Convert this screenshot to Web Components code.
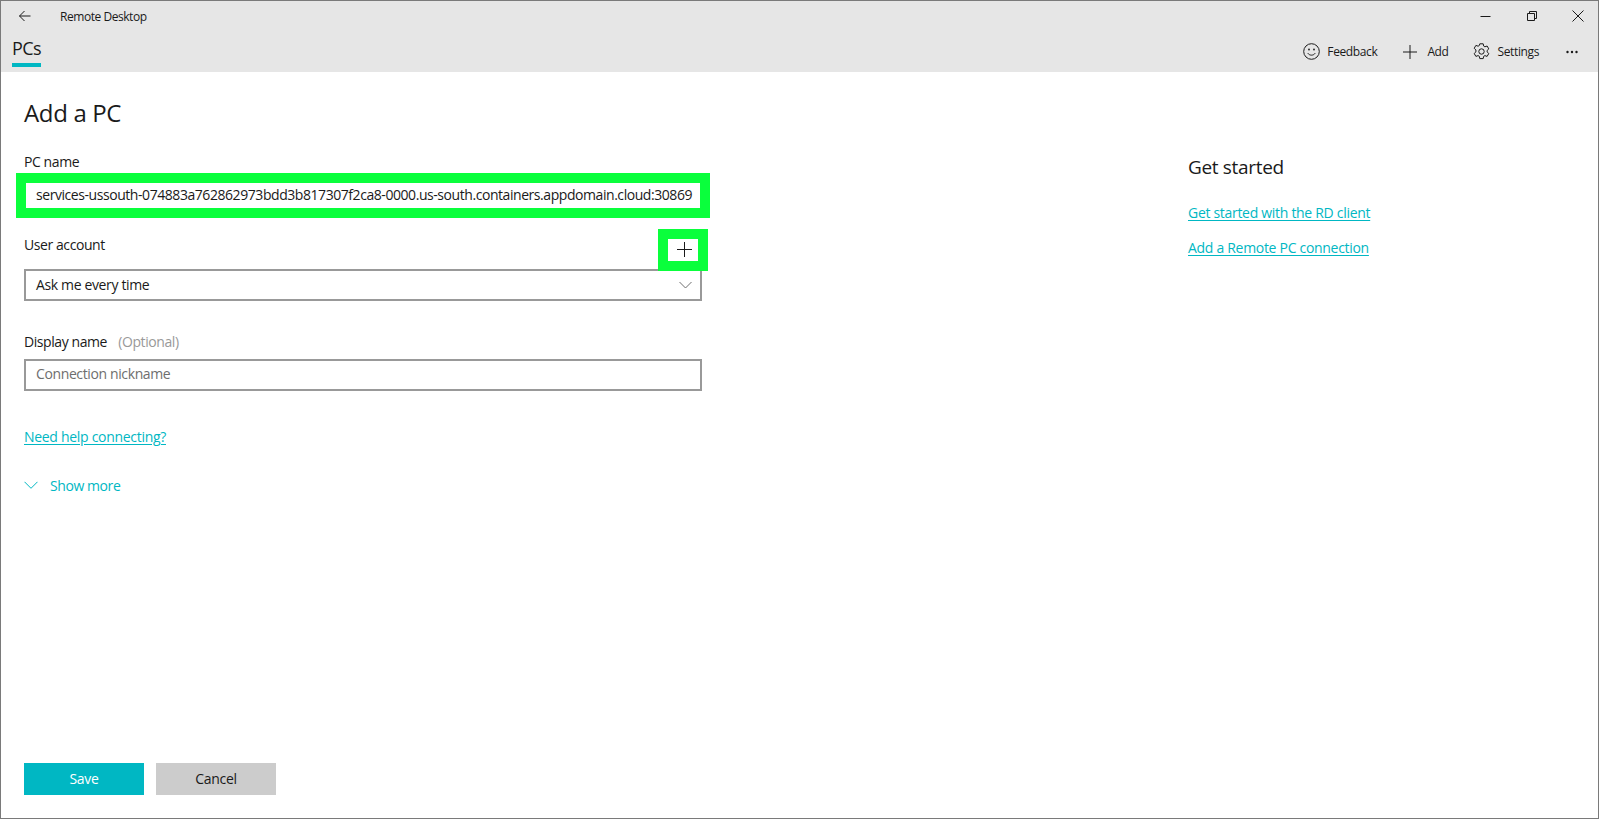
<!DOCTYPE html>
<html lang="en">
<head>
<meta charset="utf-8">
<title>Remote Desktop</title>
<style>
  html, body { margin: 0; padding: 0; background: #fff; }
  body { font-family: "Open Sans", "Noto Sans", sans-serif; font-size: 14px; color: #1a1a1a; }
</style>
</head>
<body>
<app-window></app-window>
<script>
const BASE_FONT = '"Open Sans", "Noto Sans", sans-serif';

class TitleBar extends HTMLElement {
  constructor() {
    super();
    this.shadow = this.attachShadow({ mode: 'open' });
  }

  connectedCallback () {
    this.shadow.innerHTML = /*html*/`
    <style>
      :host{
        display: flex;
        align-items: center;
        height: 30px;
        font-family: ${BASE_FONT};
        font-size: 12px;
        letter-spacing: -0.45px;
        color: #1a1a1a;
      }
      svg{ display: block; fill: none; stroke: #1a1a1a; stroke-width: 1; }
      .back{ margin-left: 18px; }
      .title{ margin-left: 29px; flex: 1; }
      .controls{ display: flex; margin-right: 14px; }
      .controls svg{ margin-left: 34px; }
    </style>
    <svg class="back" width="12" height="12" viewBox="0 0 12 12"><path d="M.5 6h11M5.500 1 .5 6l5 5"/></svg>
    <span class="title">Remote Desktop</span>
    <div class="controls">
      <svg width="12" height="12" viewBox="0 0 12 12"><path d="M.5 6.500h10"/></svg>
      <svg width="12" height="12" viewBox="0 0 12 12"><path d="M1.500 3.500h7v7h-7zM3.500 3.500v-2h7v7h-2"/></svg>
      <svg width="12" height="12" viewBox="0 0 12 12"><path d="M.5.500l11 11M11.500.500l-11 11"/></svg>
    </div>
    `;
  }
}

class CommandBar extends HTMLElement {
  constructor() {
    super();
    this.shadow = this.attachShadow({ mode: 'open' });
  }

  connectedCallback () {
    this.shadow.innerHTML = /*html*/`
    <style>
      :host{
        display: flex;
        justify-content: space-between;
        height: 41px;
        font-family: ${BASE_FONT};
        color: #1a1a1a;
      }
      .tab{
        margin-left: 11px;
        height: 36px;
        box-sizing: border-box;
        border-bottom: 4px solid #00b7c3;
        font-size: 18px;
        line-height: 34px;
        letter-spacing: -0.6px;
      }
      .tools{
        display: flex;
        align-items: center;
        font-size: 12px;
        letter-spacing: -0.38px;
        height: 41px;
      }
      .tool{ display: flex; align-items: center; }
      svg{ display: block; fill: none; stroke: #1a1a1a; stroke-width: 1; }
      .feedback svg{ margin-right: 7px; }
      .add{ margin-left: 26px; }
      .add svg{ margin-right: 10px; }
      .settings{ margin-left: 24px; }
      .settings svg{ margin-right: 8px; }
      .more{ margin-left: 27px; margin-right: 20px; }
      .more svg{ fill: #1a1a1a; stroke: none; }
    </style>
    <div class="tab">PCs</div>
    <div class="tools">
      <div class="tool feedback">
        <svg width="17" height="17" viewBox="0 0 17 17"><circle cx="8.500" cy="8.500" r="7.800"/><circle cx="6" cy="6.500" r=".9" fill="#1a1a1a" stroke="none"/><circle cx="11" cy="6.500" r=".9" fill="#1a1a1a" stroke="none"/><path d="M4.800 10.200c1.800 2.600 5.600 2.600 7.400 0"/></svg>
        <span>Feedback</span>
      </div>
      <div class="tool add">
        <svg width="14" height="14" viewBox="0 0 14 14"><path d="M7 0v14M0 7h14"/></svg>
        <span>Add</span>
      </div>
      <div class="tool settings">
        <svg width="17" height="17" viewBox="0 0 17 17"><path d="M6.800 .8h3.400l.5 2.300 1.200.7 2.200-.8 1.700 2.900-1.700 1.600v1.400l1.700 1.600-1.700 2.900-2.200-.8-1.200.7-.5 2.300H6.800l-.5-2.300-1.200-.7-2.200.8-1.700-2.900 1.700-1.600V6.900L1.200 5.300l1.700-2.900 2.200.8 1.200-.7z"/><circle cx="8.500" cy="8.500" r="2.700"/></svg>
        <span>Settings</span>
      </div>
      <div class="tool more">
        <svg width="12" height="4" viewBox="0 0 12 4"><circle cx="1.500" cy="2" r="1.200"/><circle cx="6" cy="2" r="1.200"/><circle cx="10.500" cy="2" r="1.200"/></svg>
      </div>
    </div>
    `;
  }
}

class FieldLabel extends HTMLElement {
  constructor() {
    super();
    this.attachShadow({ mode: 'open' }).innerHTML = /*html*/`
    <style>
      :host{
        display: block;
        height: 20px;
        line-height: 20px;
        font-size: 14px;
        letter-spacing: -0.42px;
        color: #1a1a1a;
      }
    </style>
    <slot></slot>
    `;
  }
}

class TextBox extends HTMLElement {
  constructor() {
    super();
    this.attachShadow({ mode: 'open' }).innerHTML = /*html*/`
    <style>
      :host{
        display: block;
        box-sizing: border-box;
        height: 32px;
        border: 2px solid #999;
        padding-left: 10px;
        line-height: 26px;
        font-size: 14px;
        letter-spacing: -0.38px;
        color: #1a1a1a;
        background: #fff;
      }
      :host([placeholder]){ color: #6e6e6e; }
      :host([highlight]){
        height: 45px;
        margin: 0 -8px;
        border: 10px solid #0aff3c;
        padding-left: 10px;
        line-height: 23px;
        letter-spacing: -0.44px;
        white-space: nowrap;
        overflow: hidden;
      }
    </style>
    <slot></slot>
    `;
  }
}

class ComboBox extends HTMLElement {
  constructor() {
    super();
    this.attachShadow({ mode: 'open' }).innerHTML = /*html*/`
    <style>
      :host{
        display: flex;
        justify-content: space-between;
        align-items: center;
        box-sizing: border-box;
        height: 32px;
        border: 2px solid #999;
        padding: 0 8px 0 10px;
        line-height: 26px;
        font-size: 14px;
        letter-spacing: -0.36px;
        color: #1a1a1a;
      }
      svg{ display: block; fill: none; stroke: #6e6e6e; stroke-width: 1; }
    </style>
    <slot></slot>
    <svg width="13" height="8" viewBox="0 0 13 8"><path d="M.5 1l6 6 6-6"/></svg>
    `;
  }
}

class PlusButton extends HTMLElement {
  constructor() {
    super();
    this.attachShadow({ mode: 'open' }).innerHTML = /*html*/`
    <style>
      :host{
        display: flex;
        align-items: center;
        justify-content: center;
        box-sizing: border-box;
        width: 50px;
        height: 42px;
        margin-right: -6px;
        margin-bottom: -2px;
        border: 10px solid #0aff3c;
        background: #fff;
        position: relative;
      }
      svg{ display: block; fill: none; stroke: #1a1a1a; stroke-width: 1; margin: -2px 0 0 2px; }
    </style>
    <svg width="15" height="15" viewBox="0 0 15 15"><path d="M7.500 0v15M0 7.500h15"/></svg>
    `;
  }
}

class LinkText extends HTMLElement {
  constructor() {
    super();
    this.attachShadow({ mode: 'open' }).innerHTML = /*html*/`
    <style>
      :host{
        display: block;
        width: max-content;
        height: 20px;
        line-height: 20px;
        font-size: 14px;
        letter-spacing: -0.3px;
        color: #00b7c3;
        text-decoration: underline;
        text-underline-offset: 2px;
      }
    </style>
    <slot></slot>
    `;
  }
}

class ActionButton extends HTMLElement {
  constructor() {
    super();
    this.attachShadow({ mode: 'open' }).innerHTML = /*html*/`
    <style>
      :host{
        display: flex;
        align-items: center;
        justify-content: center;
        box-sizing: border-box;
        width: 120px;
        height: 32px;
        padding-bottom: 2px;
        font-size: 14px;
        letter-spacing: -0.27px;
        background: #ccc;
        color: #1a1a1a;
      }
      :host([accent]){ background: #00b7c3; color: #fff; }
    </style>
    <slot></slot>
    `;
  }
}

class AddPcForm extends HTMLElement {
  constructor() {
    super();
    this.shadow = this.attachShadow({ mode: 'open' });
  }

  connectedCallback () {
    this.shadow.innerHTML = /*html*/`
    <style>
      :host{
        display: flex;
        flex-direction: column;
        width: 678px;
        margin-left: 23px;
      }
      h1{
        margin: 25px 0 23px;
        height: 32px;
        line-height: 32px;
        font-size: 24px;
        font-weight: 400;
        letter-spacing: -0.35px;
        color: #1a1a1a;
      }
      .pc-name{ margin-top: 1px; }
      .account-row{
        display: flex;
        justify-content: space-between;
        align-items: flex-start;
        margin-top: 11px;
        height: 40px;
      }
      .account-row field-label{ margin-top: 6px; }
      .display-label{ margin-top: 31px; margin-bottom: 7px; }
      .optional{ color: #999; margin-left: 8px; }
      .help{ margin-top: 36px; }
      .more{
        display: flex;
        align-items: center;
        height: 20px;
        margin-top: 28px;
        font-size: 14px;
        letter-spacing: -0.42px;
        color: #00b7c3;
      }
      .more svg{ display: block; fill: none; stroke: #00b7c3; stroke-width: 1; margin-right: 12px; }
    </style>
    <h1>Add a PC</h1>
    <field-label>PC name</field-label>
    <text-box class="pc-name" highlight>services-ussouth-074883a762862973bdd3b817307f2ca8-0000.us-south.containers.appdomain.cloud:30869</text-box>
    <div class="account-row">
      <field-label>User account</field-label>
      <plus-button></plus-button>
    </div>
    <combo-box>Ask me every time</combo-box>
    <field-label class="display-label">Display name <span class="optional">(Optional)</span></field-label>
    <text-box placeholder>Connection nickname</text-box>
    <link-text class="help">Need help connecting?</link-text>
    <div class="more">
      <svg width="14" height="8" viewBox="0 0 14 8"><path d="M.5 .8l6.500 6.500L13.500 .8"/></svg>
      <span>Show more</span>
    </div>
    `;
  }
}

class HelpPanel extends HTMLElement {
  constructor() {
    super();
    this.shadow = this.attachShadow({ mode: 'open' });
  }

  connectedCallback () {
    this.shadow.innerHTML = /*html*/`
    <style>
      :host{
        display: flex;
        flex-direction: column;
        margin-left: 486px;
        padding-top: 81px;
      }
      h2{
        margin: 0 0 22px;
        height: 28px;
        line-height: 28px;
        font-size: 19px;
        font-weight: 400;
        letter-spacing: -0.33px;
        color: #1a1a1a;
      }
      link-text{ margin-bottom: 15px; }
    </style>
    <h2>Get started</h2>
    <link-text>Get started with the RD client</link-text>
    <link-text>Add a Remote PC connection</link-text>
    `;
  }
}

class AppWindow extends HTMLElement {
  constructor() {
    super();
    this.shadow = this.attachShadow({ mode: 'open' });
  }

  connectedCallback () {
    this.shadow.innerHTML = /*html*/`
    <style>
      :host{
        display: flex;
        flex-direction: column;
        box-sizing: border-box;
        width: 1599px;
        height: 819px;
        border: 1px solid #7a7a7a;
        font-family: ${BASE_FONT};
        overflow: hidden;
      }
      header{ background: #e6e6e6; }
      main{ flex: 1; display: flex; }
      footer{ display: flex; gap: 12px; padding: 0 0 23px 23px; }
    </style>
    <header>
      <title-bar></title-bar>
      <command-bar></command-bar>
    </header>
    <main>
      <add-pc-form></add-pc-form>
      <help-panel></help-panel>
    </main>
    <footer>
      <action-button accent>Save</action-button>
      <action-button>Cancel</action-button>
    </footer>
    `;
  }
}

customElements.define('title-bar', TitleBar);
customElements.define('command-bar', CommandBar);
customElements.define('field-label', FieldLabel);
customElements.define('text-box', TextBox);
customElements.define('combo-box', ComboBox);
customElements.define('plus-button', PlusButton);
customElements.define('link-text', LinkText);
customElements.define('action-button', ActionButton);
customElements.define('add-pc-form', AddPcForm);
customElements.define('help-panel', HelpPanel);
customElements.define('app-window', AppWindow);
</script>
</body>
</html>
